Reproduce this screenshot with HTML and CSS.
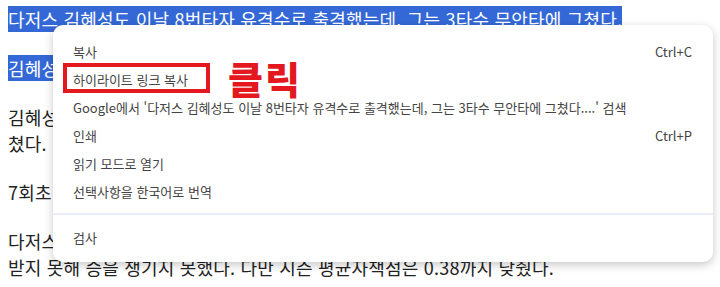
FILE: index.html
```html
<!DOCTYPE html>
<html lang="ko">
<head>
    <meta charset="UTF-8">
    <meta name="viewport" content="width=device-width, initial-scale=1.0">
    <title>하이라이트 링크 복사</title>
    <link rel="stylesheet" href="styles.css">
</head>
<body>
    <article class="article">
        <p><span class="selected">다저스 김혜성도 이날 8번타자 유격수로 출격했는데, 그는 3타수 무안타에 그쳤다.</span></p>
        <p><span class="selected">김혜성은 2회 첫 타석에서 2루 땅볼로 물러났다.</span></p>
        <p>김혜성은 이날 세 번 타석에 들어섰지만 2루 땅볼과 삼진, 유격수 땅볼로 물러나며 무안타에 그쳤다.</p>
        <p>7회초 다저스는 추가 득점 기회를 잡았지만 살리지 못했다.</p>
        <p class="keep">다저스 선발 투수 야마모토 요시노부는 7이닝 1피안타 무실점으로 호투했지만 타선의 지원을 받지 못해 승을 챙기지 못했다. 다만 시즌 평균자책점은 0.38까지 낮췄다.</p>
    </article>

    <!-- 우클릭 메뉴 -->
    <div class="context-menu">
        <ul class="menu-list">
            <li class="menu-item"><span>복사</span><span class="shortcut">Ctrl+C</span></li>
            <li class="menu-item"><span>하이라이트 링크 복사</span></li>
            <li class="menu-item"><span>Google에서 '다저스 김혜성도 이날 8번타자 유격수로 출격했는데, 그는 3타수 무안타에 그쳤다....' 검색</span></li>
            <li class="menu-item"><span>인쇄</span><span class="shortcut">Ctrl+P</span></li>
            <li class="menu-item"><span>읽기 모드로 열기</span></li>
            <li class="menu-item"><span>선택사항을 한국어로 번역</span></li>
        </ul>
        <div class="menu-divider"></div>
        <ul class="menu-list">
            <li class="menu-item"><span>검사</span></li>
        </ul>

        <!-- 안내 표시 -->
        <div class="mark-box"></div>
        <div class="mark-label">클릭</div>
    </div>
</body>
</html>
```

FILE: styles.css
```css
* {
    margin: 0;
    padding: 0;
    box-sizing: border-box;
}

body {
    background: #fff;
    color: #222;
    font-family: 'Noto Sans CJK KR', 'Noto Sans', sans-serif;
    padding: 6px 8px 0;
}

.article {
    width: 704px;
}

.article p {
    font-size: 18px;
    line-height: 26px;
    letter-spacing: 0.2px;
    margin-bottom: 23px;
}

.article p:last-child {
    margin-bottom: 0;
}

.article .keep {
    word-break: keep-all;
}

.selected {
    background: #3468d6;
    color: #fff;
}

/* 우클릭 메뉴 */
.context-menu {
    position: absolute;
    left: 53px;
    top: 25px;
    width: 660px;
    background: #fff;
    border-radius: 10px;
    box-shadow: 0 3px 10px rgba(0, 0, 0, 0.22);
    padding: 12px 0 11px;
    color: #444;
    font-size: 13px;
}

.menu-list {
    list-style: none;
}

.menu-item {
    display: flex;
    justify-content: space-between;
    align-items: center;
    height: 28px;
    padding: 0 21px 0 20px;
    white-space: nowrap;
}

.menu-divider {
    height: 2px;
    background: #e9ebf8;
    margin: 8px 0;
}

.mark-box {
    position: absolute;
    left: 10px;
    top: 38px;
    width: 147px;
    height: 30px;
    border: 4px solid #e3191f;
}

.mark-label {
    position: absolute;
    left: 175px;
    top: 34px;
    font-size: 38px;
    line-height: 1;
    font-weight: 900;
    letter-spacing: 2px;
    color: #e3191f;
}
```
